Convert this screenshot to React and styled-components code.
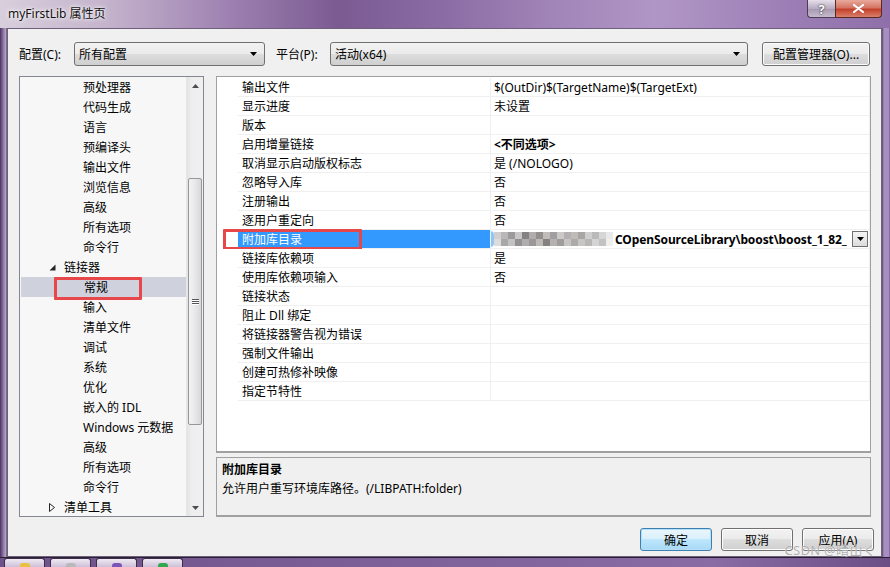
import React from 'react'
import styled, { createGlobalStyle } from 'styled-components'

const GlobalStyle = createGlobalStyle`
  html, body {
    margin: 0;
    padding: 0;
  }
  body {
    width: 890px;
    height: 567px;
    overflow: hidden;
    font-family: "Noto Sans", "Noto Sans CJK SC", sans-serif;
    font-size: 12px;
    color: #000;
  }
  * { box-sizing: border-box; }
`

const treeItems = [
    { text: '预处理器', level: 2 },
    { text: '代码生成', level: 2 },
    { text: '语言', level: 2 },
    { text: '预编译头', level: 2 },
    { text: '输出文件', level: 2 },
    { text: '浏览信息', level: 2 },
    { text: '高级', level: 2 },
    { text: '所有选项', level: 2 },
    { text: '命令行', level: 2 },
    { text: '链接器', level: 1, expander: 'open' },
    { text: '常规', level: 2, selected: true },
    { text: '输入', level: 2 },
    { text: '清单文件', level: 2 },
    { text: '调试', level: 2 },
    { text: '系统', level: 2 },
    { text: '优化', level: 2 },
    { text: '嵌入的 IDL', level: 2 },
    { text: 'Windows 元数据', level: 2 },
    { text: '高级', level: 2 },
    { text: '所有选项', level: 2 },
    { text: '命令行', level: 2 },
    { text: '清单工具', level: 1, expander: 'closed' },
]

const gridRows = [
    { name: '输出文件', value: '$(OutDir)$(TargetName)$(TargetExt)' },
    { name: '显示进度', value: '未设置' },
    { name: '版本', value: '' },
    { name: '启用增量链接', value: '<不同选项>', bold: true },
    { name: '取消显示启动版权标志', value: '是 (/NOLOGO)' },
    { name: '忽略导入库', value: '否' },
    { name: '注册输出', value: '否' },
    { name: '逐用户重定向', value: '否' },
    { name: '附加库目录', selected: true },
    { name: '链接库依赖项', value: '是' },
    { name: '使用库依赖项输入', value: '否' },
    { name: '链接状态', value: '' },
    { name: '阻止 Dll 绑定', value: '' },
    { name: '将链接器警告视为错误', value: '' },
    { name: '强制文件输出', value: '' },
    { name: '创建可热修补映像', value: '' },
    { name: '指定节特性', value: '' },
]

// blurred path, two rows of grey blocks
const mosaic = [
    ['#d0d0d0', '#b9b7b8', '#9d9a9b', '#c8c8c8', '#858283', '#aeacac', '#928f8f', '#bfbcba', '#a09e9f', '#cbc9c8', '#b2b0b0', '#bfbbb7', '#a7a5a5', '#cfcfcf', '#bababa', '#d6d6d6', '#e9e9e9'],
    ['#dcdcdc', '#a9a7a8', '#c3c2c2', '#949192', '#afadad', '#9a9798', '#bcb9b7', '#858181', '#b3b1b1', '#9f9c9b', '#c7c5c4', '#acaaaa', '#c8c6c5', '#b8b6b6', '#d4d4d4', '#c2c2c2', '#eeeeee'],
]

const Arrow = ({ up }) => (
    <svg width="7" height="4" viewBox="0 0 7 4">
        <path d={up ? 'M0 4 L3.5 0 L7 4 Z' : 'M0 0 L7 0 L3.5 4 Z'} fill="currentColor" />
    </svg>
)

const Expander = ({ open }) => (
    open ? (
        <svg width="7" height="7" viewBox="0 0 7 7">
            <path d="M6.5 0.5 L6.5 6.5 L0.5 6.5 Z" fill="#262626" />
        </svg>
    ) : (
        <svg width="6" height="9" viewBox="0 0 6 9">
            <path d="M0.5 0.5 L5.5 4.5 L0.5 8.5 Z" fill="none" stroke="#262626" strokeWidth="1" />
        </svg>
    )
)

const App = () => {
    return (
        <Screen>
            <GlobalStyle />
            <TitleBar>
                <Title>myFirstLib 属性页</Title>
                <Captions>
                    <HelpButton>?</HelpButton>
                    <CloseButton>
                        <svg width="11" height="9" viewBox="0 0 11 9">
                            <path d="M1 1 L10 8 M10 1 L1 8" stroke="#fff" strokeWidth="2.2" strokeLinecap="round" />
                        </svg>
                    </CloseButton>
                </Captions>
            </TitleBar>

            <Body>
                <FrameLeft />
                <Client>
                    <Toolbar>
                        <FieldLabel $w={55}>配置(C):</FieldLabel>
                        <Combo $w={191}>
                            <span>所有配置</span>
                            <Arrow />
                        </Combo>
                        <FieldLabel $w={54} $ml={11}>平台(P):</FieldLabel>
                        <Combo $w={418}>
                            <span>活动(x64)</span>
                            <Arrow />
                        </Combo>
                        <PushButton $w={108} $ml={14}>配置管理器(O)...</PushButton>
                    </Toolbar>

                    <Main>
                        <Tree>
                            <TreeList>
                                {treeItems.map((item, i) => (
                                    <TreeItem key={i} $level={item.level} $selected={item.selected}>
                                        {item.expander && (
                                            <ExpanderBox>
                                                <Expander open={item.expander === 'open'} />
                                            </ExpanderBox>
                                        )}
                                        {item.text}
                                        {item.selected && <TreeMark />}
                                    </TreeItem>
                                ))}
                            </TreeList>
                            <ScrollBar>
                                <ScrollArrow><Arrow up /></ScrollArrow>
                                <ScrollTrack>
                                    <Thumb>
                                        <Grip><i /><i /><i /></Grip>
                                    </Thumb>
                                </ScrollTrack>
                                <ScrollArrow><Arrow /></ScrollArrow>
                            </ScrollBar>
                        </Tree>

                        <RightColumn>
                            <Grid>
                                {gridRows.map((row, i) => (
                                    <GridRow key={i}>
                                        <Margin />
                                        <NameCell $selected={row.selected}>{row.name}</NameCell>
                                        {row.selected ? (
                                            <ValueCell $tight>
                                                <Nub />
                                                <Mosaic>
                                                    {mosaic.map((line, r) => line.map((c, k) => (
                                                        <Block key={r + '-' + k} $c={c} />
                                                    )))}
                                                </Mosaic>
                                                <PathText>COpenSourceLibrary\boost\boost_1_82_</PathText>
                                                <DropButton><Arrow /></DropButton>
                                            </ValueCell>
                                        ) : (
                                            <ValueCell $bold={row.bold}>{row.value}</ValueCell>
                                        )}
                                        {row.selected && <RowMark />}
                                    </GridRow>
                                ))}
                            </Grid>
                            <Description>
                                <DescTitle>附加库目录</DescTitle>
                                <DescText>允许用户重写环境库路径。(/LIBPATH:folder)</DescText>
                            </Description>
                        </RightColumn>
                    </Main>

                    <Footer>
                        <PushButton $w={72} $default>确定</PushButton>
                        <PushButton $w={72}>取消</PushButton>
                        <PushButton $w={72}>应用(A)</PushButton>
                    </Footer>
                </Client>
                <FrameRight />
            </Body>

            <Taskbar>
                <TaskTab><TaskIcon $c="#e8c23a" /></TaskTab>
                <TaskTab><TaskIcon $c="#b9b9b9" /></TaskTab>
                <TaskTab><TaskIcon $c="#7b55b8" /></TaskTab>
                <TaskTab><TaskIcon $c="#2fa84f" /></TaskTab>
            </Taskbar>

            <Watermark>CSDN @晴山く</Watermark>
        </Screen>
    )
}

const Screen = styled.div`
    position: relative;
    width: 890px;
    height: 567px;
    display: flex;
    flex-direction: column;
    background: #7d5f98;
    overflow: hidden;
`

const TitleBar = styled.div`
    height: 28px;
    display: flex;
    align-items: flex-start;
    justify-content: space-between;
    background: linear-gradient(90deg, #d8cfdc 0%, #c4b3cc 12%, #9d80b0 26%, #7b5a92 38%, #8c6ca4 50%, #a184b8 62%, #b096c6 74%, #9d7fb6 88%, #8f6fa9 100%);
`

const Title = styled.div`
    padding: 6px 0 0 8px;
    font-size: 12px;
    line-height: 16px;
    color: #111;
    text-shadow: 0 0 6px #fff, 0 0 3px #fff;
`

const Captions = styled.div`
    display: flex;
    margin-right: 8px;
`

const HelpButton = styled.div`
    width: 28px;
    height: 18px;
    display: flex;
    align-items: center;
    justify-content: center;
    border: 1px solid #4c3c58;
    border-top: none;
    border-right: none;
    border-radius: 0 0 0 4px;
    background: linear-gradient(#e6e0ea, #b8abc2 50%, #a597b0 51%, #c6bccd);
    color: #fff;
    font-weight: bold;
    font-size: 13px;
    text-shadow: 0 0 2px #333, 0 0 1px #333;
`

const CloseButton = styled.div`
    width: 47px;
    height: 18px;
    display: flex;
    align-items: center;
    justify-content: center;
    border: 1px solid #5a2a22;
    border-top: none;
    border-radius: 0 0 4px 0;
    background: linear-gradient(#e9a99c, #d47564 45%, #c4412c 55%, #d8806a);
`

const Body = styled.div`
    display: flex;
    height: 529px;
`

const FrameLeft = styled.div`
    width: 7px;
    background: linear-gradient(90deg, #4a3360, #8a72a0 45%, #b3a2c2 80%, #5c4a6a);
`

const FrameRight = styled.div`
    width: 8px;
    background: linear-gradient(90deg, #5a4a68, #a88fc2 25%, #a88dc0 85%, #6f5488);
`

const Client = styled.div`
    width: 875px;
    background: #f0f0f0;
    border: 1px solid #6e627a;
    padding: 13px 0 0 11px;
    display: flex;
    flex-direction: column;
`

const Toolbar = styled.div`
    height: 24px;
    display: flex;
    align-items: center;
`

const FieldLabel = styled.div`
    width: ${p => p.$w}px;
    margin-left: ${p => p.$ml || 0}px;
    white-space: nowrap;
`

const Combo = styled.div`
    width: ${p => p.$w}px;
    height: 24px;
    display: flex;
    align-items: center;
    justify-content: space-between;
    padding: 0 7px 0 4px;
    border: 1px solid #707070;
    border-radius: 3px;
    background: linear-gradient(#f2f2f2 0%, #ebebeb 49%, #dddddd 50%, #cfcfcf 100%);
    color: #000;
    svg { color: #000; }
`

const PushButton = styled.div`
    width: ${p => p.$w}px;
    height: ${p => (p.$w > 100 ? 24 : 23)}px;
    margin-left: ${p => p.$ml || 0}px;
    display: flex;
    align-items: center;
    justify-content: center;
    border: 1px solid ${p => (p.$default ? '#3c7fb1' : '#707070')};
    border-radius: 3px;
    background: ${p => (p.$default
        ? 'linear-gradient(#eaf6fd 0%, #d9f0fc 49%, #bee6fd 50%, #a7d9f5 100%)'
        : 'linear-gradient(#f2f2f2 0%, #ebebeb 49%, #dddddd 50%, #cfcfcf 100%)')};
    box-shadow: ${p => (p.$default ? 'inset 0 0 0 1px #b6def6' : 'inset 0 0 0 1px #fcfcfc')};
    white-space: nowrap;
`

const Main = styled.div`
    margin-top: 10px;
    height: 441px;
    display: flex;
    gap: 12px;
`

const Tree = styled.div`
    width: 185px;
    height: 441px;
    display: flex;
    border: 1px solid #828790;
    background: #f7f7f7;
`

const TreeList = styled.div`
    flex: 1;
    overflow: hidden;
`

const TreeItem = styled.div`
    position: relative;
    height: 20px;
    display: flex;
    align-items: center;
    padding-left: ${p => (p.$level === 1 ? 29 : 63)}px;
    background: ${p => (p.$selected ? '#cfd2dd' : 'transparent')};
    margin-left: ${p => (p.$selected ? 1 : 0)}px;
    white-space: nowrap;
`

const ExpanderBox = styled.span`
    width: 15px;
    display: flex;
    align-items: center;
`

const TreeMark = styled.div`
    position: absolute;
    left: 33px;
    top: 0;
    width: 88px;
    height: 23px;
    border: 3px solid #e8474a;
    border-radius: 1px;
`

const ScrollBar = styled.div`
    width: 17px;
    display: flex;
    flex-direction: column;
    background: linear-gradient(90deg, #e3e3e3, #eeeeee 30%, #f0f0f0);
    border-left: 1px solid #e6e6e6;
`

const ScrollArrow = styled.div`
    height: 17px;
    display: flex;
    align-items: center;
    justify-content: center;
    color: #4d4d4d;
`

const ScrollTrack = styled.div`
    flex: 1;
    padding: 84px 1px 0 1px;
`

const Thumb = styled.div`
    height: 247px;
    border: 1px solid #979797;
    border-radius: 2px;
    background: linear-gradient(90deg, #f3f3f3, #e8e8e8 50%, #d8d8d8);
    display: flex;
    justify-content: center;
    align-items: center;
`

const Grip = styled.div`
    display: flex;
    flex-direction: column;
    gap: 1px;
    margin-top: -1px;
    i {
        display: block;
        width: 7px;
        height: 1px;
        background: #555;
        box-shadow: 0 1px 0 #fff;
    }
`

const RightColumn = styled.div`
    width: 655px;
    display: flex;
    flex-direction: column;
    gap: 4px;
`

const Grid = styled.div`
    height: 377px;
    background: #fff;
    border: 1px solid #a0a0a0;
    border-bottom-width: 2px;
    padding-top: 1px;
`

const GridRow = styled.div`
    position: relative;
    height: 19px;
    display: grid;
    grid-template-columns: 21px 252px 380px;
`

const Margin = styled.div`
    background: #fff;
`

const NameCell = styled.div`
    display: flex;
    align-items: center;
    padding-left: 4px;
    border-bottom: 1px solid #f0f0f0;
    background: ${p => (p.$selected ? '#3399ff' : '#fff')};
    color: ${p => (p.$selected ? '#fff' : '#000')};
    white-space: nowrap;
`

const ValueCell = styled.div`
    position: relative;
    display: flex;
    align-items: center;
    padding-left: ${p => (p.$tight ? 0 : 3)}px;
    border-left: 1px solid #f0f0f0;
    border-right: 1px solid #f0f0f0;
    border-bottom: 1px solid #f0f0f0;
    font-weight: ${p => (p.$bold ? 'bold' : 'normal')};
    white-space: nowrap;
    overflow: hidden;
`

const Nub = styled.div`
    position: absolute;
    left: -1px;
    top: 1px;
    width: 4px;
    height: 16px;
    border-radius: 0 4px 4px 0;
    background: #8ec4f6;
`

const Mosaic = styled.div`
    display: grid;
    grid-template-columns: repeat(17, 7px);
    grid-auto-rows: 7px;
    margin-left: 3px;
    margin-right: 2px;
    flex: none;
`

const Block = styled.div`
    background: ${p => p.$c};
`

const PathText = styled.div`
    flex: 1;
    min-width: 0;
    overflow: hidden;
    font-weight: bold;
    letter-spacing: -0.1px;
`

const DropButton = styled.div`
    flex: none;
    width: 16px;
    height: 16px;
    margin-right: 1px;
    display: flex;
    align-items: center;
    justify-content: center;
    border: 1px solid #707070;
    background: linear-gradient(#f4f4f4, #dcdcdc);
    color: #000;
`

const RowMark = styled.div`
    position: absolute;
    left: 6px;
    top: -1px;
    width: 139px;
    height: 21px;
    border: 3px solid #e8474a;
    border-radius: 1px;
`

const Description = styled.div`
    height: 60px;
    border: 1px solid #a0a0a0;
    border-bottom-width: 2px;
    padding: 2px 5px 0 5px;
    background: #f0f0f0;
`

const DescTitle = styled.div`
    line-height: 19px;
    font-weight: bold;
`

const DescText = styled.div`
    line-height: 19px;
`

const Footer = styled.div`
    margin-top: 11px;
    padding-right: 7px;
    display: flex;
    justify-content: flex-end;
    gap: 9px;
`

const Taskbar = styled.div`
    flex: 1;
    display: flex;
    gap: 5px;
    padding-left: 4px;
    border-top: 1px solid #2b1f38;
    background: linear-gradient(90deg, #6f5289, #7d5f98 40%, #8a6ca4 80%, #6a4e84);
`

const TaskTab = styled.div`
    width: 41px;
    display: flex;
    justify-content: center;
    border: 1px solid #3d2d4d;
    border-bottom: none;
    border-radius: 3px 3px 0 0;
    background: linear-gradient(#efeaf2, #cdbfd8);
`

const TaskIcon = styled.div`
    width: 10px;
    height: 4px;
    margin-top: 4px;
    border-radius: 3px 3px 0 0;
    background: ${p => p.$c};
`

const Watermark = styled.div`
    position: absolute;
    right: 14px;
    bottom: 9px;
    font-size: 13px;
    line-height: 15px;
    letter-spacing: 0.3px;
    color: rgba(140, 140, 140, 0.7);
    text-shadow: 0 0 1px #fff;
    pointer-events: none;
`

export default App
